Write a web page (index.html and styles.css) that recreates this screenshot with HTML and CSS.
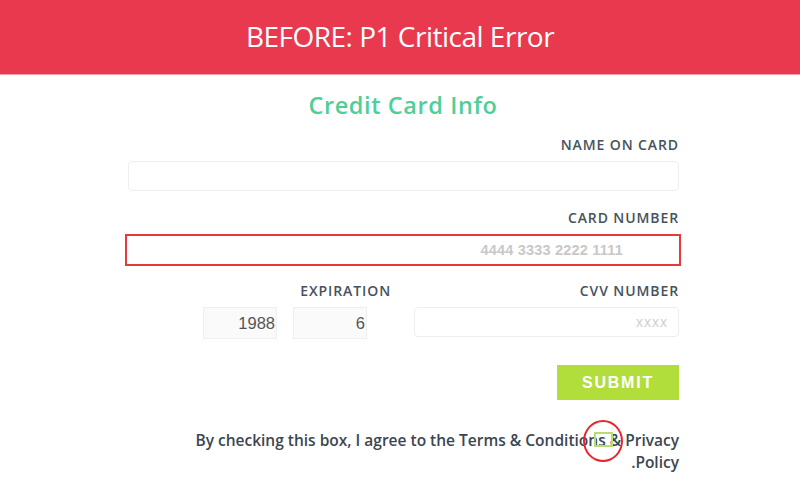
FILE: index.html
```html
<!DOCTYPE html>
<html lang="en">
<head>
<meta charset="utf-8">
<title>BEFORE: P1 Critical Error</title>
<link rel="stylesheet" href="styles.css">
</head>
<body>
<header class="banner">
  <h1 class="banner-title">BEFORE: P1 Critical Error</h1>
</header>
<main class="page">
  <h2 class="form-title">Credit Card Info</h2>
  <form class="card-form">
    <label class="field-label first-label">NAME ON CARD</label>
    <input class="field-input" type="text">

    <label class="field-label">CARD NUMBER</label>
    <input class="field-input field-error" type="text" placeholder="4444 3333 2222 1111">

    <div class="split-row">
      <div class="cvv-col">
        <label class="field-label cvv-label">CVV NUMBER</label>
        <input class="field-input cvv-input" type="text" placeholder="xxxx">
      </div>
      <div class="exp-col">
        <label class="field-label exp-label">EXPIRATION</label>
        <div class="exp-inputs">
          <div class="exp-box">6</div>
          <div class="exp-box">1988</div>
        </div>
      </div>
    </div>

    <div class="submit-row">
      <button class="submit-btn" type="button">SUBMIT</button>
    </div>

    <p class="agree">By checking this box, I agree to the Terms &amp; Conditions &amp; Privacy Policy.<span class="agree-check"></span><span class="error-ring"></span></p>
  </form>
</main>
</body>
</html>
```

FILE: styles.css
```css
* { box-sizing: border-box; }
html, body { margin: 0; padding: 0; background: #ffffff; }
body { font-family: "Open Sans", "Liberation Sans", sans-serif; width: 800px; height: 500px; overflow: hidden; }

.banner {
  height: 75px;
  background: #e8394e;
  display: flex;
  align-items: center;
  justify-content: center;
  border-bottom: 1px solid #f2a0a8;
}
.banner-title {
  margin: 0;
  color: #ffffff;
  font-weight: 400;
  font-size: 28px;
  font-stretch: 90%;
  letter-spacing: -0.5px;
  padding-bottom: 2px;
}

.page { width: 556px; margin: 0 0 0 125px; }
.form-title {
  margin: 16px 0 0;
  text-align: center;
  color: #4fcf98;
  font-size: 23.5px;
  font-weight: 600;
  line-height: 28px;
  letter-spacing: 0.6px;
}

.card-form { direction: rtl; display: flex; flex-direction: column; }
.field-label {
  display: block;
  color: #46525d;
  font-size: 14px;
  font-weight: 600;
  letter-spacing: 0.9px;
  line-height: 18px;
  margin: 0 2px 7px 0;
}
.first-label { margin-top: 17px; }
.exp-label { margin-right: 0; }
.cvv-label { margin-right: 0; }

.field-input {
  display: block;
  width: 551px;
  height: 30px;
  margin: 0 2px 18px 3px;
  border: 1px solid #eceef0;
  border-radius: 4px;
  background: #fff;
  font-family: "Liberation Sans", Arial, sans-serif;
  font-size: 13px;
  outline: none;
}
.field-input::placeholder { color: #c8c8c8; font-weight: 700; }
.field-error {
  direction: ltr;
  text-align: right;
  width: 556px;
  height: 32px;
  margin: 0 0 16px 0;
  border: 2px solid #e8393a;
  border-radius: 0;
  padding-right: 56px;
  font-size: 14.5px;
  letter-spacing: 0.2px;
}

.split-row { display: flex; flex-direction: row; gap: 23px; }
.cvv-col { width: 265px; margin-right: 2px; }
.cvv-input { width: 265px; margin: 0; padding-right: 10px; }
.cvv-input::placeholder { font-weight: 400; color: #cfcfcf; font-size: 14px; letter-spacing: 1px; }
.exp-col { width: 188px; }
.exp-inputs { display: flex; gap: 16px; margin-right: 24px; }
.exp-box {
  width: 74px;
  height: 32px;
  border: 1px solid #efefef;
  background: #fafafa;
  color: #555;
  font-family: "Liberation Sans", Arial, sans-serif;
  font-size: 16.5px;
  line-height: 30px;
  padding-right: 1px;
}

.submit-row { display: flex; margin-top: 26px; margin-right: 2px; }
.submit-btn {
  width: 122px;
  height: 35px;
  border: none;
  background: #b2de3c;
  color: #ffffff;
  font-family: "Liberation Sans", Arial, sans-serif;
  font-weight: 700;
  font-size: 16px;
  letter-spacing: 1.8px;
  cursor: pointer;
}

.agree {
  position: relative;
  margin: 29px 2px 0 0;
  width: 500px;
  align-self: flex-start;
  color: #3b4651;
  font-size: 15.5px;
  font-weight: 600;
  letter-spacing: 0;
  line-height: 22px;
}
.agree-check {
  position: absolute;
  right: 66px;
  top: 3px;
  width: 19px;
  height: 15px;
  border: 2px solid #b6dc72;
}
.error-ring {
  position: absolute;
  right: 56px;
  top: -9px;
  width: 40px;
  height: 42px;
  border: 2px solid #e8262c;
  border-radius: 50%;
}
```
